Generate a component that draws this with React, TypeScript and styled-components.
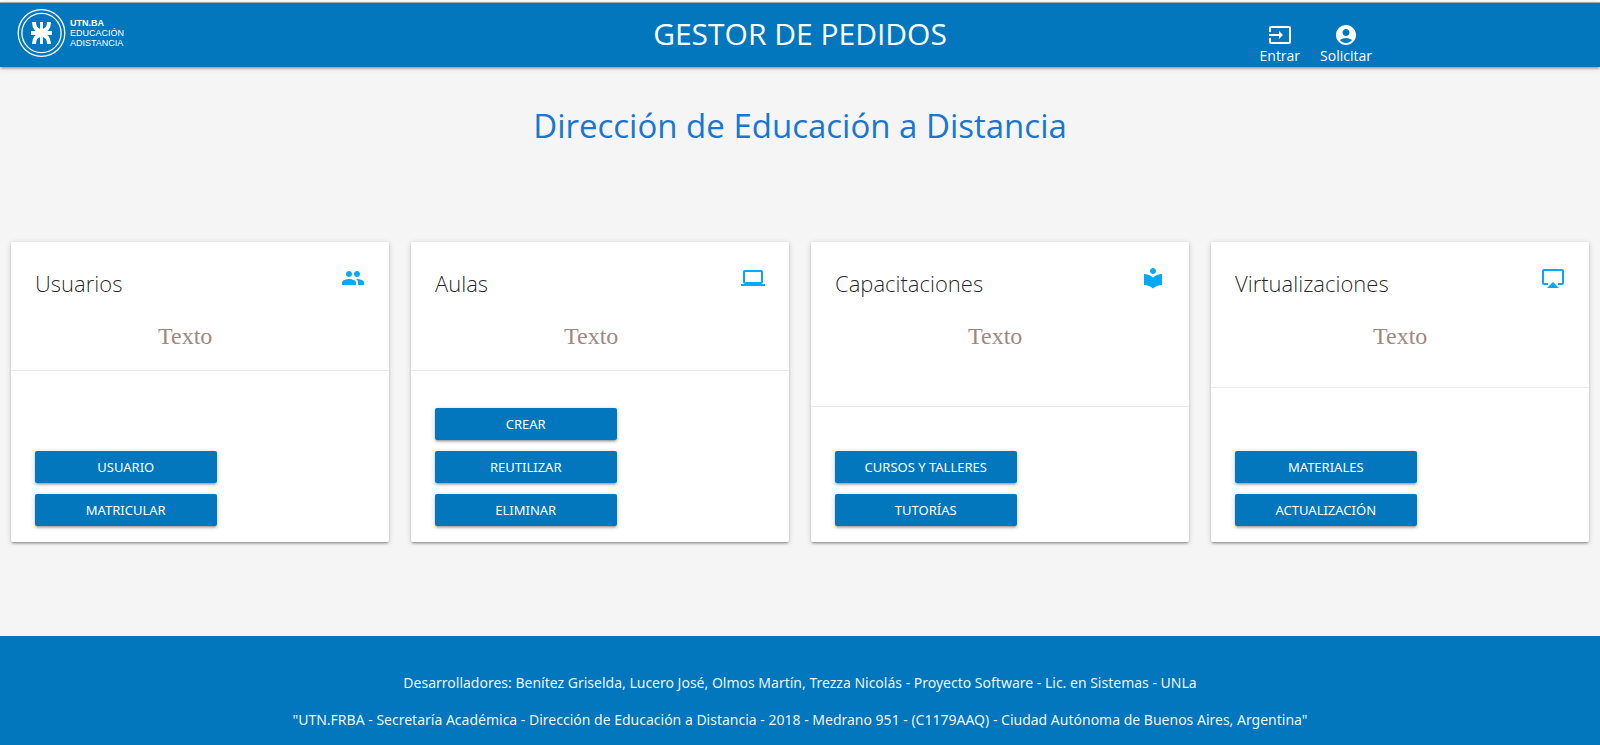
import React from "react";
import styled, { createGlobalStyle } from "styled-components";
import type { IconType } from "react-icons";
import {
  MdAccountCircle,
  MdAirplay,
  MdInput,
  MdLaptop,
  MdLocalLibrary,
  MdPeople,
} from "react-icons/md";

const colors = {
  primary: "#0277bd",
  accent: "#03a9f4",
  heading: "#1976d2",
  page: "#f5f5f5",
  note: "#a1887f",
};

const raised =
  "0 2px 2px 0 rgba(0,0,0,.14), 0 3px 1px -2px rgba(0,0,0,.12), 0 1px 5px 0 rgba(0,0,0,.2)";

const GlobalStyle = createGlobalStyle`
  *, *::before, *::after { box-sizing: border-box; }
  body {
    margin: 0;
    background: ${colors.page};
    font-family: "Segoe UI", "Open Sans", "Noto Sans", sans-serif;
    color: rgba(0, 0, 0, 0.87);
  }
`;

const Page = styled.div`
  display: flex;
  flex-direction: column;
  min-height: 100vh;
  border-top: 2px solid #fff;
`;

const Header = styled.header`
  display: grid;
  grid-template-columns: 1fr auto 1fr;
  height: 65px;
  border-top: 1px solid #a8a8a8;
  background: ${colors.primary};
  color: #fff;
  box-shadow: ${raised};
`;

const Brand = styled.a`
  display: flex;
  align-items: center;
  gap: 4px;
  padding-left: 17px;
  padding-bottom: 4px;
  color: inherit;
  text-decoration: none;
`;

const BrandText = styled.span`
  display: flex;
  flex-direction: column;
  font: 9px/10px "Liberation Sans", Arial, sans-serif;
`;

const BrandName = styled.strong`
  font-weight: 700;
`;

const AppTitle = styled.h1`
  margin: 0;
  font-size: 30px;
  line-height: 61px;
  font-weight: 400;
`;

const Nav = styled.nav`
  display: flex;
  justify-content: flex-end;
  align-items: flex-end;
  gap: 12px;
  padding-right: 14vw;
`;

const NavLink = styled.a`
  display: flex;
  flex-direction: column;
  align-items: center;
  padding: 0 4px 3px;
  color: inherit;
  font-size: 14px;
  line-height: 17px;
  text-decoration: none;
`;

const Main = styled.main`
  flex: 1;
  padding: 0 11px 94px;
`;

const Heading = styled.h2`
  margin: 36px 0 94px;
  text-align: center;
  font-size: 33px;
  line-height: 45px;
  font-weight: 400;
  color: ${colors.heading};
`;

const CardGrid = styled.div`
  display: grid;
  grid-template-columns: repeat(auto-fit, minmax(280px, 1fr));
  gap: 22px;
`;

const Card = styled.article`
  display: flex;
  flex-direction: column;
  min-height: 300px;
  border-radius: 2px;
  background: #fff;
  box-shadow: ${raised};
`;

const CardBody = styled.div<{ $height: number }>`
  min-height: ${(p) => p.$height}px;
  padding: 24px 24px 16px;
  border-bottom: 1px solid rgba(160, 160, 160, 0.2);
`;

const CardTop = styled.div`
  display: flex;
  justify-content: space-between;
`;

const CardTitle = styled.h3`
  margin: 0;
  font-size: 22px;
  line-height: 34px;
  font-weight: 300;
`;

const CardIcon = styled.span`
  display: flex;
  color: ${colors.accent};
`;

const CardNote = styled.p<{ $indent: number }>`
  margin: 20px 0 0;
  padding-left: ${(p) => p.$indent}px;
  font: 24px/32px "Liberation Serif", "Times New Roman", serif;
  color: ${colors.note};
`;

const CardActions = styled.div`
  display: flex;
  flex-direction: column;
  align-items: flex-start;
  gap: 11px;
  margin-top: auto;
  padding: 16px 24px;
`;

const ActionButton = styled.button`
  width: 55%;
  height: 32px;
  border: 0;
  border-radius: 2px;
  background: ${colors.primary};
  color: #fff;
  font-family: "Segoe UI", "Noto Sans", sans-serif;
  font-size: 13px;
  text-transform: uppercase;
  box-shadow: ${raised};
  cursor: pointer;
`;

const Footer = styled.footer`
  display: flex;
  flex-direction: column;
  gap: 15px;
  padding: 36px 24px 14px;
  background: ${colors.primary};
  color: rgba(255, 255, 255, 0.95);
  text-align: center;
`;

const FooterLine = styled.p`
  margin: 0;
  font-family: "Segoe UI", "Noto Sans", sans-serif;
  font-size: 14px;
  line-height: 22px;
`;

function UtnLogo() {
  return (
    <svg width="49" height="49" viewBox="0 0 49 49" fill="none" stroke="#fff" aria-hidden="true">
      <circle cx="24.5" cy="24" r="23.3" strokeWidth="1.3" />
      <circle cx="24.5" cy="24" r="19.6" strokeWidth="1.3" />
      <path d="M24.5 13v22" strokeWidth="3" />
      <path d="M14 24h21" strokeWidth="4" />
      <path
        d="M17 13c0 6 3 9 7.500 9s7.500-3 7.500-9M17 35c0-6 3-9 7.500-9s7.500 3 7.500 9"
        strokeWidth="4"
      />
    </svg>
  );
}

interface CardData {
  title: string;
  icon: IconType;
  bodyHeight: number;
  noteIndent: number;
  actions: string[];
}

const cards: CardData[] = [
  { title: "Usuarios", icon: MdPeople, bodyHeight: 129, noteIndent: 123, actions: ["Usuario", "Matricular"] },
  { title: "Aulas", icon: MdLaptop, bodyHeight: 129, noteIndent: 129, actions: ["Crear", "Reutilizar", "Eliminar"] },
  { title: "Capacitaciones", icon: MdLocalLibrary, bodyHeight: 165, noteIndent: 133, actions: ["Cursos y talleres", "Tutorías"] },
  { title: "Virtualizaciones", icon: MdAirplay, bodyHeight: 146, noteIndent: 138, actions: ["Materiales", "Actualización"] },
];

export default function App() {
  return (
    <Page>
      <GlobalStyle />
      <Header>
        <Brand href="#">
          <UtnLogo />
          <BrandText>
            <BrandName>UTN.BA</BrandName>
            <span>EDUCACIÓN</span>
            <span>ADISTANCIA</span>
          </BrandText>
        </Brand>
        <AppTitle>GESTOR DE PEDIDOS</AppTitle>
        <Nav>
          <NavLink href="#entrar">
            <MdInput size={24} />
            Entrar
          </NavLink>
          <NavLink href="#solicitar">
            <MdAccountCircle size={24} />
            Solicitar
          </NavLink>
        </Nav>
      </Header>
      <Main>
        <Heading>Dirección de Educación a Distancia</Heading>
        <CardGrid>
          {cards.map(({ title, icon: Icon, bodyHeight, noteIndent, actions }) => (
            <Card key={title}>
              <CardBody $height={bodyHeight}>
                <CardTop>
                  <CardTitle>{title}</CardTitle>
                  <CardIcon>
                    <Icon size={24} />
                  </CardIcon>
                </CardTop>
                <CardNote $indent={noteIndent}>Texto</CardNote>
              </CardBody>
              <CardActions>
                {actions.map((action) => (
                  <ActionButton key={action} type="button">
                    {action}
                  </ActionButton>
                ))}
              </CardActions>
            </Card>
          ))}
        </CardGrid>
      </Main>
      <Footer>
        <FooterLine>
          Desarrolladores: Benítez Griselda, Lucero José, Olmos Martín, Trezza Nicolás - Proyecto
          Software - Lic. en Sistemas - UNLa
        </FooterLine>
        <FooterLine>
          "UTN.FRBA - Secretaría Académica - Dirección de Educación a Distancia - 2018 - Medrano 951
          - (C1179AAQ) - Ciudad Autónoma de Buenos Aires, Argentina"
        </FooterLine>
      </Footer>
    </Page>
  );
}
